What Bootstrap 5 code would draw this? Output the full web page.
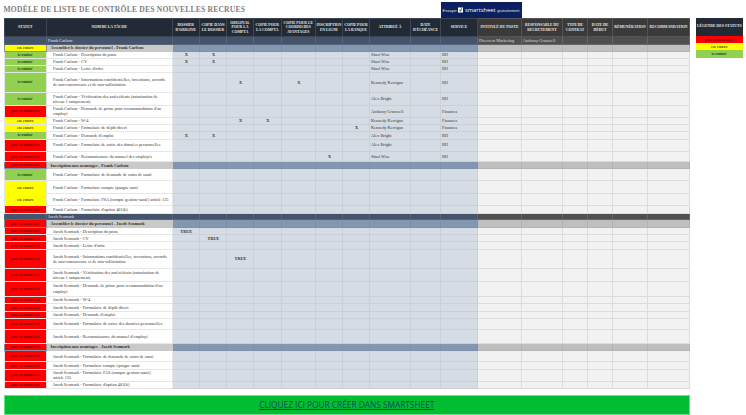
<!DOCTYPE html>
<html lang="fr">
<head>
  <meta charset="UTF-8" />
  <meta name="viewport" content="width=device-width, initial-scale=1" />
  <title>Modèle de liste de contrôle des nouvelles recrues</title>
  <link href="https://cdn.jsdelivr.net/npm/bootstrap@5.3.3/dist/css/bootstrap.min.css" rel="stylesheet" />
  <style>
    body { background: #fff; overflow: hidden; font-family: "Liberation Serif", serif; }
    .page { width: 746px; height: 415px; padding: 0 3px 0 3.5px; }
    .title-row { height: 18px; }
    .page-title { width: 437.5px; margin: 0; font: bold 7.6px/16px "Liberation Serif", serif; letter-spacing: .2px; color: #808080; padding-top: 2px; }
    .try-banner { width: 81px; height: 16px; margin-top: 2px; background: #0c1f5e; color: #dfe4f2; font: 4px "Liberation Sans", sans-serif; text-decoration: none; gap: 1.5px; }
    .try-banner b { font: 5.8px "Open Sans", sans-serif; color: #fff; }
    .table.tracker { width: 686.5px; margin: 0; table-layout: fixed; font-size: 4.3px; line-height: 1.22; }
    .table.tracker > :not(caption) > * > * { padding: 0 0 0 1px; vertical-align: middle; border: 1px solid #cbd0d8; color: #363636; overflow: hidden; box-shadow: none; }
    .table.tracker > thead > tr > th { background: #222b35; color: #e8e8e8; border-color: #3c4654; font-size: 3.75px; text-align: center; padding: 0; }
    .table.tracker > thead > tr > th.grey { background: #3a3a3a; border-color: #555; }
    .table.tracker > tbody > tr > td.st { text-align: center; font-weight: bold; font-size: 4.6px; border-color: #e4e4e4; padding: 0; }
    .table.tracker > tbody > tr > td.pas { background: #f00; color: #7a0f0f; }
    .table.tracker > tbody > tr > td.cours { background: #ff0; color: #5b5b00; }
    .table.tracker > tbody > tr > td.fini { background: #92d050; color: #2f5218; }
    .table.tracker > tbody > tr > td.task { background: #fff; padding: 0 1px 0 6px; border-color: #e6e6e6; }
    .table.tracker > tbody > tr > td.blue { background: #d6dce4; }
    .table.tracker > tbody > tr > td.mark { text-align: center; font-weight: bold; color: #333; }
    .table.tracker > tbody > tr > td.free { background: #f2f2f2; border-color: #dcdcdc; }
    .table.tracker > tbody > tr.person > td { background: #44546a; color: #e6e9ee; border-color: #56657a; }
    .table.tracker > tbody > tr.person > td.free { background: #4f4f4f; color: #dcdcdc; border-color: #666; }
    .table.tracker > tbody > tr.group > td { background: #8497b0; border-color: #8090a8; }
    .table.tracker > tbody > tr.group > td.task { background: #c9c9c9; font-weight: bold; padding-left: 3.5px; color: #333; border-color: #c9c9c9; }
    .table.tracker > tbody > tr.group > td.free { background: #bfbfbf; border-color: #b4b4b4; }
    .table.tracker > tbody > tr.group > td.st.pas { background: #f00; }
    .table.tracker > tbody > tr.group > td.st.cours { background: #ff0; }
    .legend { width: 46.5px; margin-left: 6px; font-weight: bold; text-align: center; }
    .legend-head { height: 18px; background: #222b35; color: #e8e8e8; font-size: 3.8px; white-space: nowrap; }
    .legend-item { height: 7.2px; line-height: 7.2px; font-size: 4.6px; }
    .legend .pas { background: #f00; color: #7a0f0f; }
    .legend .cours { background: #ff0; color: #5b5b00; }
    .legend .fini { background: #92d050; color: #2f5218; }
    .cta { width: 686.5px; height: 19.5px; margin-top: 6.3px; background: #00bd32; border: 1px solid #5fe486; color: #0c4a63; font: 8.3px/17.5px "Open Sans", sans-serif; }
  </style>
</head>
<body>
  <div class="page d-flex flex-column">
    <div class="title-row d-flex">
      <h1 class="page-title text-nowrap">MODÈLE DE LISTE DE CONTRÔLE DES NOUVELLES RECRUES</h1>
      <a class="try-banner d-flex align-items-center justify-content-center text-nowrap" href="#">
        <span>Essayer</span>
        <svg width="5" height="6" viewBox="0 0 12 14"><path fill="#fff" d="M0 1h12v12H0z"/><path fill="none" stroke="#0c1f5e" stroke-width="2" d="M3 6l3 4 3-7"/></svg>
        <b>smartsheet</b>
        <span>gratuitement.</span>
      </a>
    </div>

    <div class="d-flex">
      <table class="table tracker">
        <colgroup id="cols"></colgroup>
        <thead><tr id="head"></tr></thead>
        <tbody id="rows"></tbody>
      </table>
      <div class="legend">
        <div class="legend-head d-flex align-items-center justify-content-center">LÉGENDE DES STATUTS</div>
        <div class="legend-item pas">pas commencé</div>
        <div class="legend-item cours">en cours</div>
        <div class="legend-item fini">terminé</div>
      </div>
    </div>

    <a class="cta d-block text-center" href="#">CLIQUEZ ICI POUR CRÉER DANS SMARTSHEET</a>
  </div>

  <script src="https://cdn.jsdelivr.net/npm/bootstrap@5.3.3/dist/js/bootstrap.bundle.min.js"></script>
  <script>
    const headers = [
      ['STATUT', 42.5], ['NOM DE LA TÂCHE', 125.5], ['DOSSIER<br>D\'ORIGINE', 27.5], ['COPIE DANS<br>LE DOSSIER', 27],
      ['ORIGINAL<br>POUR LA<br>COMPTA', 27], ['COPIE POUR<br>LA COMPTA', 27.5], ['COPIE POUR LE<br>COORDO DES<br>AVANTAGES', 34.5],
      ['INSCRIPTION<br>EN LIGNE', 27], ['COPIE POUR<br>LA BANQUE', 27], ['ATTRIBUÉ À', 41], ['DATE<br>D\'ÉCHÉANCE', 30], ['SERVICE', 37],
      ['INTITULÉ DU POSTE', 44], ['RESPONSABLE DU<br>RECRUTEMENT', 41], ['TYPE DE<br>CONTRAT', 25], ['DATE DE<br>DÉBUT', 25],
      ['RÉMUNÉRATION', 35], ['RECOMMANDATION', 42]
    ];
    const labels = { p: ['pas commencé', 'pas'], c: ['en cours', 'cours'], t: ['terminé', 'fini'] };

    // status, task, height, marked columns, assignee, service
    function checklist(name, mark, st) {
      const who = { s: 'Shari Wise', k: 'Kennedy Kerrigan', a: 'Alex Bright', g: 'Anthony Grunwell' };
      return st.map(r => ({ st: r[0], task: r[1].replace('@', name), h: r[2], marks: r[3] || [], mark, who: who[r[4]] || '', svc: r[5] || '' }));
    }

    const frank = checklist('Frank Carlson', 'X', [
      ['t', '@ - Description du poste', 7, [0, 1], 's', 'RH'],
      ['t', '@ - CV', 7.5, [0, 1], 's', 'RH'],
      ['t', '@ - Lettre d\'offre', 7, [], 's', 'RH'],
      ['t', '@ - Informations confidentielles, inventions, accords<br>de non-concurrence et de non-sollicitation', 19.5, [2, 4], 'k', 'RH'],
      ['t', '@ - Vérification des antécédents (autorisation de<br>niveau 1 uniquement)', 13.5, [], 'a', 'RH'],
      ['p', '@ - Demande de prime pour recommandation d\'un<br>employé', 11.5, [], 'g', 'Finances'],
      ['c', '@ - W-4', 7.5, [2, 3], 'k', 'Finances'],
      ['c', '@ - Formulaire de dépôt direct', 7, [6], 'k', 'Finances'],
      ['t', '@ - Demande d\'emploi', 7.5, [0, 1], 'a', 'RH'],
      ['p', '@ - Formulaire de saisie des données personnelles', 12.2, [], 'a', 'RH'],
      ['p', '@ - Reconnaissance du manuel des employés', 10.3, [5], 's', 'RH']
    ]);
    const frankBenefits = checklist('Frank Carlson', 'X', [
      ['t', '@ - Formulaire de demande de soins de santé', 12],
      ['c', '@ - Formulaire compte épargne santé', 13],
      ['c', '@ - Formulaire FSA (compte gestion-santé) article 125', 12],
      ['p', '@ - Formulaire d\'option 401(k)', 7.5]
    ]);
    const jacob = checklist('Jacob Senmark', 'TRUE', [
      ['p', '@ - Description du poste', 7.5, [0]],
      ['p', '@ - CV', 7, [1]],
      ['p', '@ - Lettre d\'offre', 7.5],
      ['p', '@ - Informations confidentielles, inventions, accords<br>de non-concurrence et de non-sollicitation', 19, [2]],
      ['p', '@ - Vérification des antécédents (autorisation de<br>niveau 1 uniquement)', 12.7],
      ['p', '@ - Demande de prime pour recommandation d\'un<br>employé', 15],
      ['p', '@ - W-4', 7.6],
      ['p', '@ - Formulaire de dépôt direct', 7.4],
      ['p', '@ - Demande d\'emploi', 7.3],
      ['p', '@ - Formulaire de saisie des données personnelles', 11.3],
      ['p', '@ - Reconnaissance du manuel d\'employé', 13.4]
    ]);
    const jacobBenefits = checklist('Jacob Senmark', 'TRUE', [
      ['p', '@ - Formulaire de demande de soins de santé', 11],
      ['p', '@ - Formulaire compte épargne santé', 7.4],
      ['p', '@ - Formulaire FAS (compte gestion-santé)<br>article 125', 12],
      ['p', '@ - Formulaire d\'option 401(k)', 7.3]
    ]);

    const blanks = n => '<td class="free"></td>'.repeat(n);

    function statusCell(s) {
      return `<td class="st ${labels[s][1]}">${labels[s][0]}</td>`;
    }

    function personRow(name, h, job, lead) {
      return `<tr class="person" style="height:${h}px"><td></td><td>${name}</td>${'<td></td>'.repeat(10)}
        <td class="free">${job}</td><td class="free">${lead}</td>${blanks(4)}</tr>`;
    }

    function groupRow(title, s, h) {
      return `<tr class="group" style="height:${h}px">${statusCell(s)}<td class="task">${title}</td>${'<td></td>'.repeat(10)}${blanks(6)}</tr>`;
    }

    function taskRow(r) {
      let marks = '';
      for (let i = 0; i < 7; i++) {
        marks += r.marks.includes(i) ? `<td class="blue mark">${r.mark}</td>` : '<td class="blue"></td>';
      }
      return `<tr style="height:${r.h}px">${statusCell(r.st)}<td class="task">${r.task}</td>${marks}
        <td class="blue">${r.who}</td><td class="blue"></td><td class="blue">${r.svc}</td>${blanks(6)}</tr>`;
    }

    document.getElementById('cols').innerHTML = headers.map(h => `<col style="width:${h[1]}px">`).join('');
    document.getElementById('head').innerHTML = headers.map((h, i) => `<th class="${i > 11 ? 'grey' : ''}" style="height:18px">${h[0]}</th>`).join('');
    document.getElementById('rows').innerHTML = [
      personRow('Frank Carlson', 7.5, 'Directeur Marketing', 'Anthony Grunwell'),
      groupRow('Assembler le dossier du personnel - Frank Carlson', 'c', 7),
      ...frank.map(taskRow),
      groupRow('Inscription aux avantages - Frank Carlson', 'p', 7.5),
      ...frankBenefits.map(taskRow),
      personRow('Jacob Senmark', 6.5, '', ''),
      groupRow('Assembler le dossier du personnel - Jacob Senmark', 'p', 7.5),
      ...jacob.map(taskRow),
      groupRow('Inscription aux avantages - Jacob Senmark', 'p', 7.6),
      ...jacobBenefits.map(taskRow)
    ].join('');
  </script>
</body>
</html>
